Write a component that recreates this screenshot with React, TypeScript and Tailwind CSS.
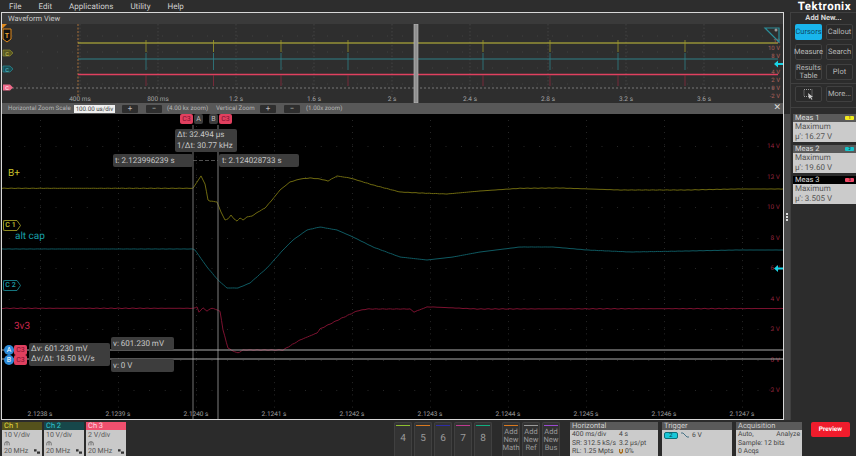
import React from 'react'

type Pt = [number, number]

const yellowPts: Pt[] = [[2,188.3],[193,188.3],[197,182],[201,176],[205,184],[208,200],[210,201],[217,202],[221,212],[225,220],[228,219],[231,215],[234,219],[237,221],[240,218],[243,220],[247,217],[252,216],[258,212],[265,208],[272,200],[280,190],[290,182],[300,179],[310,178],[320,179],[328,181],[337,176],[350,178],[360,181],[373,185],[400,192],[420,193],[447,194],[480,191],[520,188.3],[560,188],[620,190],[687,190],[737,189],[783,189]]
const tealPts: Pt[] = [[2,249],[193,249],[195,250],[207,267],[218,280],[227,288],[238,288],[250,283],[267,268],[283,250],[293,240],[307,230],[320,227],[337,230],[353,237],[373,247],[400,257],[427,260],[453,257],[480,252],[520,247],[553,247],[587,250],[630,252],[687,251],[737,250],[783,250]]
const redPts: Pt[] = [[2,308.3],[194,308.3],[197,307],[199,312],[203,308],[207,311],[212,308],[217,310],[220,311],[223,330],[228,348],[233,351],[238,353],[243,350],[283,350],[300,340],[317,333],[320,329],[330,324],[340,319],[357,311],[367,309],[410,309],[414,312],[427,307],[433,307],[477,309],[783,308.5]]

// resample with a little noise so the lines don't look ruler straight
function trace(pts: Pt[], seed: number, amp: number) {
  const out: string[] = []
  for (let i = 0; i < pts.length - 1; i++) {
    const [x0, y0] = pts[i]
    const [x1, y1] = pts[i + 1]
    const n = Math.max(1, Math.round((x1 - x0) / 2))
    for (let k = 0; k < n; k++) {
      const x = x0 + ((x1 - x0) * k) / n
      const y = y0 + ((y1 - y0) * k) / n
      const noise = (Math.sin(x * 0.9 + seed) + Math.sin(x * 2.3 + seed * 2)) * amp
      out.push(`${x.toFixed(1)},${(y + noise).toFixed(2)}`)
    }
  }
  out.push(pts[pts.length - 1].join(','))
  return out.join(' ')
}

const xTicks = [40, 118, 196, 274, 352, 430, 508, 586, 664, 742]
const xLabels = ['2.1238 s', '2.1239 s', '2.1240 s', '2.1241 s', '2.1242 s', '2.1243 s', '2.1244 s', '2.1245 s', '2.1246 s', '2.1247 s']
const yLabels: [string, number][] = [['14 V', 146], ['12 V', 177], ['10 V', 207], ['8 V', 238], ['6 V', 268], ['4 V', 299], ['2 V', 329], ['0 V', 360], ['-2 V', 390]]

const spikes = [146, 213.5, 281, 348, 416, 483, 550, 618, 685]
const ovTicks: [string, number][] = [['400 ms', 80], ['800 ms', 158], ['1.2 s', 236], ['1.6 s', 314], ['2 s', 392], ['2.4 s', 470], ['2.8 s', 548], ['3.2 s', 626], ['3.6 s', 704]]
const ovVolts: [string, number][] = [['12', 43], ['10 V', 50], ['8 V', 58], ['4 V', 74], ['2 V', 82], ['0 V', 90], ['-2 V', 98]]

function Overview() {
  return (
    <svg viewBox="2 24 781 79" className="w-[781px] h-[79px] block bg-[#2e2e2e]">
      {ovTicks.map(([, x]) => <line key={x} x1={x} x2={x} y1={24} y2={95} stroke="#4c4c4c" strokeWidth="0.7" strokeDasharray="1.5 2" />)}
      {[36, 52, 68, 84].map(y => <line key={y} x1={12} x2={770} y1={y} y2={y} stroke="#484848" strokeWidth="0.7" strokeDasharray="1 14" />)}
      <line x1={78} x2={78} y1={24} y2={96} stroke="#a8703a" strokeWidth="1" strokeDasharray="2 1.5" />
      <line x1={12} x2={775} y1={88} y2={88} stroke="#8a8a8a" strokeWidth="0.8" strokeDasharray="2 2" />
      <line x1={78} x2={778} y1={43} y2={43} stroke="#c8c23a" strokeWidth="1.2" />
      <line x1={78} x2={778} y1={59} y2={59} stroke="#2f8088" strokeWidth="1" />
      <line x1={78} x2={778} y1={74.5} y2={74.5} stroke="#e0405f" strokeWidth="1.4" />
      {spikes.map(x => (
        <g key={x}>
          <line x1={x} x2={x} y1={40} y2={52} stroke="#a09a2a" strokeWidth="0.8" />
          <line x1={x} x2={x} y1={53} y2={70} stroke="#2f8088" strokeWidth="0.8" />
          <line x1={x} x2={x} y1={75} y2={86} stroke="#8a2a3c" strokeWidth="0.8" />
        </g>
      ))}
      {ovTicks.map(([t, x]) => <text key={t} x={x} y={101} textAnchor="middle" fontSize="6.5" fill="#a5a5a5">{t}</text>)}
      {ovVolts.map(([t, y]) => <text key={t} x={780} y={y} textAnchor="end" fontSize="6" fill="#a8605a">{t}</text>)}
      <rect x={414} y={24} width={4} height={79} fill="#8f8f8f" stroke="#c4c4c4" strokeWidth="0.6" />
      <path d="M2 24h5l-3 3-2 2z" fill="#e08a1e" />
      <path d="M3 29h8v10l-4 3-4-3z" fill="#111" stroke="#e08a1e" strokeWidth="1" />
      <text x={7} y={37.5} textAnchor="middle" fontSize="7" fontWeight="700" fill="#e8a030">T</text>
      <path d="M3 50h7l3 3-3 3H3z" fill="#5a5820" stroke="#8d8a30" strokeWidth="0.7" />
      <text x={7} y={55.5} textAnchor="middle" fontSize="5.5" fill="#d8d46a">C</text>
      <path d="M3 66h7l3 3-3 3H3z" fill="#174e54" stroke="#2c8a92" strokeWidth="0.7" />
      <text x={7} y={71.5} textAnchor="middle" fontSize="5.5" fill="#66ccd4">C</text>
      <path d="M3 84.500h7l3 3-3 3H3z" fill="#f06a8a" />
      <text x={7} y={90} textAnchor="middle" fontSize="5.5" fill="#fff">C</text>
      <path d="M765 28h14v14z" fill="none" stroke="#2a8e9a" strokeWidth="1.2" />
      <circle cx={776} cy={30} r={1.5} fill="#999" />
      <path d="M774 64l4-3.500v2.500h5v2h-5v2.500z" fill="#19d4e6" />
    </svg>
  )
}

function Plot() {
  const dots: React.ReactElement[] = []
  for (let i = 0; i < 10; i++) {
    for (let y = 120; y < 415; y += 6.1) {
      dots.push(<rect key={`v${i}-${y}`} x={xTicks[i]} y={y} width="0.8" height="0.8" fill="#3c3c3c" />)
    }
  }
  yLabels.forEach(([, y]) => {
    for (let x = 8.8; x < 780; x += 15.6) {
      dots.push(<rect key={`h${y}-${x}`} x={x} y={y} width="0.8" height="0.8" fill="#3c3c3c" />)
    }
  })
  return (
    <svg viewBox="2 114 781 305" className="absolute inset-0 w-[781px] h-[305px]">
      {dots}
      {yLabels.map(([t, y]) => <text key={t} x={780} y={y + 2} textAnchor="end" fontSize="6.500" fill="#8c2038">{t}</text>)}
      {xLabels.map((t, i) => <text key={t} x={xTicks[i]} y={416} textAnchor="middle" fontSize="6.500" fill="#a0a0a0">{t}</text>)}
      <polyline points={trace(yellowPts, 1, 0.1)} fill="none" stroke="#6f6a10" strokeWidth="1" />
      <polyline points={trace(tealPts, 3, 0.06)} fill="none" stroke="#0f5a62" strokeWidth="1" />
      <polyline points={trace(redPts, 5, 0.16)} fill="none" stroke="#7c1230" strokeWidth="1" />
      <line x1={193} x2={193} y1={125} y2={419} stroke="#808080" strokeWidth="0.9" />
      <line x1={218} x2={218} y1={125} y2={419} stroke="#8c8c8c" strokeWidth="0.9" />
      <line x1={193} x2={218} y1={160.5} y2={160.5} stroke="#666" strokeWidth="0.8" strokeDasharray="4 2" />
      <line x1={2} x2={783} y1={350} y2={350} stroke="#bdbdbd" strokeWidth="0.9" />
      <line x1={2} x2={783} y1={359} y2={359} stroke="#bdbdbd" strokeWidth="0.9" />
      <path d="M774 268.500l4-3.500v2.500h5v2h-5v2.500z" fill="#19d4e6" />
    </svg>
  )
}

function ZoomBtn({ label }: { label: string }) {
  return <div className="w-[16px] h-[8px] rounded-[1px] bg-[#2e2e2e] flex items-center justify-center text-[8px] leading-none text-[#bbb]">{label}</div>
}

function Badge({ className, children }: { className: string; children: React.ReactNode }) {
  return <div className={`absolute flex items-center justify-center rounded-[2px] text-[7px] leading-none ${className}`}>{children}</div>
}

function Readouts() {
  return (
    <>
      <Badge className="left-[178px] top-0 w-[13px] h-[10px] bg-[#e0405f] text-[#7a1030]">C3</Badge>
      <Badge className="left-[192px] top-0 w-[9px] h-[10px] bg-[#3c3c3c] text-[#bbb]">A</Badge>
      <Badge className="left-[207px] top-0 w-[9px] h-[10px] bg-[#3c3c3c] text-[#bbb]">B</Badge>
      <Badge className="left-[217px] top-0 w-[13px] h-[10px] bg-[#e0405f] text-[#7a1030]">C3</Badge>

      <div className="absolute left-[173px] top-[15px] w-[62px] h-[23px] rounded-[2px] bg-[#3d3d3d] pl-[2px] pt-[1px] text-[8px] leading-[10.5px] text-[#c8c8c8]">
        <div>Δt: 32.494 µs</div>
        <div>1/Δt: 30.77 kHz</div>
      </div>
      <div className="absolute left-[111px] top-[40px] w-[80px] h-[13px] rounded-[2px] bg-[#3d3d3d] pl-[2px] text-[8px] leading-[13px] text-[#c8c8c8]">t: 2.123996239 s</div>
      <div className="absolute left-[217px] top-[40px] w-[80px] h-[13px] rounded-[2px] bg-[#3d3d3d] pl-[3px] text-[8px] leading-[13px] text-[#c8c8c8]">t: 2.124028733 s</div>

      <div className="absolute left-[6px] top-[54px] text-[10px] leading-[12px] text-[#c9c32c]">B+</div>
      <div className="absolute left-[13px] top-[117px] text-[10px] leading-[12px] text-[#18a0aa]">alt cap</div>
      <div className="absolute left-[12px] top-[207px] text-[10px] leading-[12px] text-[#c8264c]">3v3</div>
      <ChLabel className="top-[106px] border-[#8d8a20] text-[#bdb92c]" fill="#8d8a20" label="C 1" />
      <ChLabel className="top-[166px] border-[#16757e] text-[#1c9aa4]" fill="#16757e" label="C 2" />

      <div className="absolute left-[2px] top-[231px] w-[10px] h-[10px] rounded-full bg-[#2c8ad8] flex items-center justify-center text-[7px] leading-none text-white">A</div>
      <div className="absolute left-[2px] top-[241px] w-[10px] h-[10px] rounded-full bg-[#2c8ad8] flex items-center justify-center text-[7px] leading-none text-white">B</div>
      <Badge className="left-[12px] top-[231px] w-[13px] h-[10px] bg-[#e0405f] text-[#7a1030]">C3</Badge>
      <Badge className="left-[12px] top-[241px] w-[13px] h-[10px] bg-[#e0405f] text-[#7a1030]">C3</Badge>
      <div className="absolute left-[27px] top-[229px] w-[81px] h-[23px] rounded-[2px] bg-[#3d3d3d] pl-[2px] pt-[1px] text-[8px] leading-[10px] text-[#c8c8c8]">
        <div>Δv: 601.230 mV</div>
        <div>Δv/Δt: 18.50 kV/s</div>
      </div>
      <div className="absolute left-[109px] top-[223px] w-[63px] h-[13px] rounded-[2px] bg-[#3d3d3d] pl-[2px] text-[8px] leading-[13px] text-[#c8c8c8]">v: 601.230 mV</div>
      <div className="absolute left-[109px] top-[245px] w-[63px] h-[13px] rounded-[2px] bg-[#3d3d3d] pl-[2px] text-[8px] leading-[13px] text-[#c8c8c8]">v: 0 V</div>
    </>
  )
}

function ChLabel({ className, label, fill }: { className: string; label: string; fill: string }) {
  return (
    <div className={`absolute left-[1px] h-[11px] w-[14px] flex items-center justify-center border border-r-0 rounded-l-[2px] text-[7px] leading-none font-semibold ${className}`}>
      {label}
      <svg viewBox="0 0 4 11" className="absolute left-[13px] top-[-1px] w-[4px] h-[11px]">
        <path d="M0 0.500L3.500 5.500L0 10.500" fill="none" stroke={fill} strokeWidth="1" />
      </svg>
    </div>
  )
}

function SideBtn({ children, active }: { children: React.ReactNode; active?: boolean }) {
  return (
    <div className={`w-[27px] h-[16px] rounded-[2px] flex items-center justify-center text-center text-[7.5px] leading-[8px] ${active ? 'bg-[#19b5ec] text-[#0d4a66]' : 'bg-[#2a2a2a] border border-[#404040] text-[#b8b8b8]'}`}>
      {children}
    </div>
  )
}

function Meas({ title, v, color, num, selected }: { title: string; v: string; color: string; num: string; selected?: boolean }) {
  return (
    <div className="ml-[2px] mb-[3px]">
      <div className={`h-[8px] flex items-center justify-between pl-[2px] pr-[2px] text-[7.500px] leading-none ${selected ? 'bg-black text-[#ddd]' : 'bg-[#5a5a5a] text-[#ddd]'}`}>
        <span>{title}</span>
        <span className={`w-[9px] h-[4px] rounded-[1px] text-[4px] leading-[4px] text-center text-black ${color}`}>{num}</span>
      </div>
      <div className="h-[20px] bg-[#cbcbcb] pl-[2px] text-[8px] leading-[9.500px] text-[#555]">
        <div>Maximum</div>
        <div>µ': {v}</div>
      </div>
    </div>
  )
}

function SidePanel() {
  return (
    <div className="w-[66px] h-full border-l border-t border-[#404040] bg-[#2c2c2c]">
      <div className="h-[11px] text-center text-[7.500px] leading-[10px] font-bold text-[#d8d8d8]">Add New...</div>
      <div className="grid grid-cols-[27px_27px] gap-x-[4px] gap-y-[4px] pl-[4px]">
        <SideBtn active>Cursors</SideBtn>
        <SideBtn>Callout</SideBtn>
        <SideBtn>Measure</SideBtn>
        <SideBtn>Search</SideBtn>
        <SideBtn><span>Results<br />Table</span></SideBtn>
        <SideBtn>Plot</SideBtn>
      </div>
      <div className="h-px bg-[#404040] mt-[3px] mb-[2px]" />
      <div className="grid grid-cols-[27px_27px] gap-x-[4px] pl-[4px]">
        <SideBtn>
          <svg viewBox="0 0 14 12" className="w-[14px] h-[12px]">
            <rect x="2" y="1.500" width="8" height="7" fill="none" stroke="#bbb" strokeWidth="0.8" strokeDasharray="1 1" />
            <path d="M6 5l5 4-2 .3 1.500 2-1 .5-1.300-2L7 11z" fill="#ccc" />
          </svg>
        </SideBtn>
        <SideBtn>More...</SideBtn>
      </div>
      <div className="h-px bg-[#404040] mt-[5px] mb-[6px]" />
      <Meas title="Meas 1" v="16.27 V" color="bg-[#f2ea1e]" num="1" />
      <Meas title="Meas 2" v="19.60 V" color="bg-[#16c4cc]" num="2" />
      <Meas title="Meas 3" v="3.505 V" color="bg-[#ef4a68]" num="3" selected />
    </div>
  )
}

function ChCard({ name, scale, head, text }: { name: string; scale: string; head: string; text: string }) {
  return (
    <div className="w-[40px] h-[34px] flex flex-col">
      <div className={`h-[8px] pl-[2px] text-[7.500px] leading-[8px] ${head} ${text}`}>{name}</div>
      <div className="flex-1 bg-[#c9c9c9] px-[2px] text-[7px] leading-[8px] text-[#555] flex flex-col justify-between pb-[1px] pt-[1px]">
        <div>{scale}</div>
        <svg viewBox="0 0 8 6" className="w-[6px] h-[5px]">
          <path d="M1 5.500V3a3 2.500 0 0 1 6 0v2.500M4 1v4.500" fill="none" stroke="#555" strokeWidth="1" />
        </svg>
        <div className="flex items-center justify-between">
          <span>20 MHz</span>
          <svg viewBox="0 0 7 5" className="w-[6px] h-[5px]">
            <path d="M0 0h3v2.500H0zM3.500 2.500h3.500V5H3.500z" fill="#333" />
          </svg>
        </div>
      </div>
    </div>
  )
}

function NumBtn({ n, color }: { n: string; color: string }) {
  return (
    <div className="w-[18px] h-[34px] rounded-t-[2px] bg-[#333] border-x border-t border-[#404040] flex flex-col items-center pt-[2px]">
      <div className={`w-[14px] h-px ${color}`} />
      <div className="mt-[6px] text-[10px] leading-[14px] text-[#9a9a9a]">{n}</div>
    </div>
  )
}

function AddBtn({ lines, color }: { lines: string[]; color: string }) {
  return (
    <div className="w-[18px] h-[34px] rounded-t-[2px] bg-[#333] border-x border-t border-[#404040] flex flex-col items-center pt-[2px]">
      <div className={`w-[14px] h-px mb-[2px] ${color}`} />
      {lines.map(l => <div key={l} className="text-[7.500px] leading-[8px] text-[#9a9a9a]">{l}</div>)}
    </div>
  )
}

function InfoCard({ title, className, children }: { title: string; className: string; children: React.ReactNode }) {
  return (
    <div className={`h-[34px] flex flex-col ${className}`}>
      <div className="h-[8px] bg-[#5a5a5a] pl-[2px] text-[7.500px] leading-[8px] text-[#d0d0d0]">{title}</div>
      <div className="flex-1 bg-[#cbcbcb] px-[2px] text-[6.800px] leading-[8.500px] text-[#444]">{children}</div>
    </div>
  )
}

export default function App() {
  return (
    <div className="w-[856px] h-[456px] overflow-hidden flex flex-col whitespace-nowrap bg-[#2b2b2b] font-['Roboto',sans-serif] [text-rendering:geometricPrecision]">
      {/* menu */}
      <div className="h-[12px] flex items-center justify-between pr-[5px] bg-[#2d2d2d]">
        <div className="flex pl-[9px] gap-[17px] text-[8px] leading-[11px] text-[#d0d0d0]">
          <span>File</span>
          <span>Edit</span>
          <span>Applications</span>
          <span>Utility</span>
          <span>Help</span>
        </div>
        <div className="text-[11.500px] leading-[12px] tracking-[0.5px] font-bold text-white">Tektronix</div>
      </div>

      <div className="h-[408px] flex">
        <div className="ml-px w-[783px] h-full border border-[#d8d8d8] flex flex-col">
          <div className="h-[11px] bg-[#3a3a3a] pl-[6px] text-[7.500px] leading-[11px] text-[#c8c8c8]">Waveform View</div>
          <Overview />
          <div className="h-[11px] bg-[#585858] flex items-center pl-[6px] text-[6.200px] leading-none text-[#b5b5b5] relative">
            <span className="w-[66px]">Horizontal Zoom Scale</span>
            <span className="w-[41px] h-[8px] bg-[#efefef] text-[#444] text-center leading-[8px]">100.00 us/div</span>
            <span className="ml-[7px]"><ZoomBtn label="+" /></span>
            <span className="ml-[8px]"><ZoomBtn label="−" /></span>
            <span className="ml-[5px] w-[49px]">(4.00 kx zoom)</span>
            <span className="w-[44px]">Vertical Zoom</span>
            <ZoomBtn label="+" />
            <span className="ml-[8px]"><ZoomBtn label="−" /></span>
            <span className="ml-[6px]">(1.00x zoom)</span>
            <span className="absolute right-[2px] top-[1px] text-[9px] leading-[9px] text-[#ddd]">✕</span>
          </div>
          <div className="relative flex-1 bg-black">
            <Plot />
            <Readouts />
          </div>
        </div>
        <div className="w-[6px] h-full flex flex-col">
          <div className="h-[102px]" />
          <div className="flex-1 bg-[#4a4a4a] flex flex-col items-center pt-[99px] gap-[1px]">
            <div className="w-[2px] h-[2px] bg-[#ddd]" />
            <div className="w-[2px] h-[2px] bg-[#ddd]" />
            <div className="w-[2px] h-[2px] bg-[#ddd]" />
          </div>
        </div>
        <SidePanel />
      </div>

      {/* bottom bar */}
      <div className="h-[36px] flex items-end pb-0 pl-[2px]">
        <div className="flex gap-[2px]">
          <ChCard name="Ch 1" scale="10 V/div" head="bg-[#55521c]" text="text-[#e0da40]" />
          <ChCard name="Ch 2" scale="10 V/div" head="bg-[#17474a]" text="text-[#30c8d0]" />
          <ChCard name="Ch 3" scale="2 V/div" head="bg-[#f0506e]" text="text-[#ffd8e0]" />
        </div>
        <div className="ml-[268px] flex gap-[2px]">
          <NumBtn n="4" color="bg-[#8fbf2f]" />
          <NumBtn n="5" color="bg-[#d9791f]" />
          <NumBtn n="6" color="bg-[#2d2da8]" />
          <NumBtn n="7" color="bg-[#c03a90]" />
          <NumBtn n="8" color="bg-[#10b080]" />
        </div>
        <div className="ml-[10px] flex gap-[2px]">
          <AddBtn lines={['Add', 'New', 'Math']} color="bg-[#d9791f]" />
          <AddBtn lines={['Add', 'New', 'Ref']} color="bg-[#9a9a9a]" />
          <AddBtn lines={['Add', 'New', 'Bus']} color="bg-[#9a4ad0]" />
        </div>
        <div className="ml-[10px] flex gap-[4px]">
          <InfoCard title="Horizontal" className="w-[88px]">
            <div className="grid grid-cols-[47px_1fr]">
              <span>400 ms/div</span><span>4 s</span>
              <span>SR: 312.5 kS/s</span><span>3.2 µs/pt</span>
              <span>RL: 1.25 Mpts</span>
              <span className="flex items-center gap-[2px]">
                <svg viewBox="0 0 5 6" className="w-[4px] h-[5px]"><path d="M0 0h1.500v3.500h2V0H5v4L2.500 6 0 4z" fill="#a86a10" /></svg>
                0%
              </span>
            </div>
          </InfoCard>
          <InfoCard title="Trigger" className="w-[70px]">
            <div className="flex items-center pt-[1px] gap-[3px]">
              <span className="w-[14px] h-[7px] rounded-[2px] bg-[#19c8d8] border border-[#0d6f7a] text-center text-[6px] leading-[6px] text-[#0a4a50]">2</span>
              <svg viewBox="0 0 8 6" className="w-[8px] h-[6px]"><path d="M0 1h2l4 4h2" fill="none" stroke="#3a6a80" strokeWidth="0.9" /></svg>
              <span>6 V</span>
            </div>
          </InfoCard>
          <InfoCard title="Acquisition" className="w-[66px]">
            <div className="flex justify-between"><span>Auto,</span><span>Analyze</span></div>
            <div>Sample: 12 bits</div>
            <div>0 Acqs</div>
          </InfoCard>
        </div>
        <div className="ml-[9px] mb-[19px] w-[39px] h-[15px] rounded-[2px] bg-[#f01c2c] text-center text-[6.500px] leading-[15px] font-bold text-white">Preview</div>
      </div>
    </div>
  )
}
